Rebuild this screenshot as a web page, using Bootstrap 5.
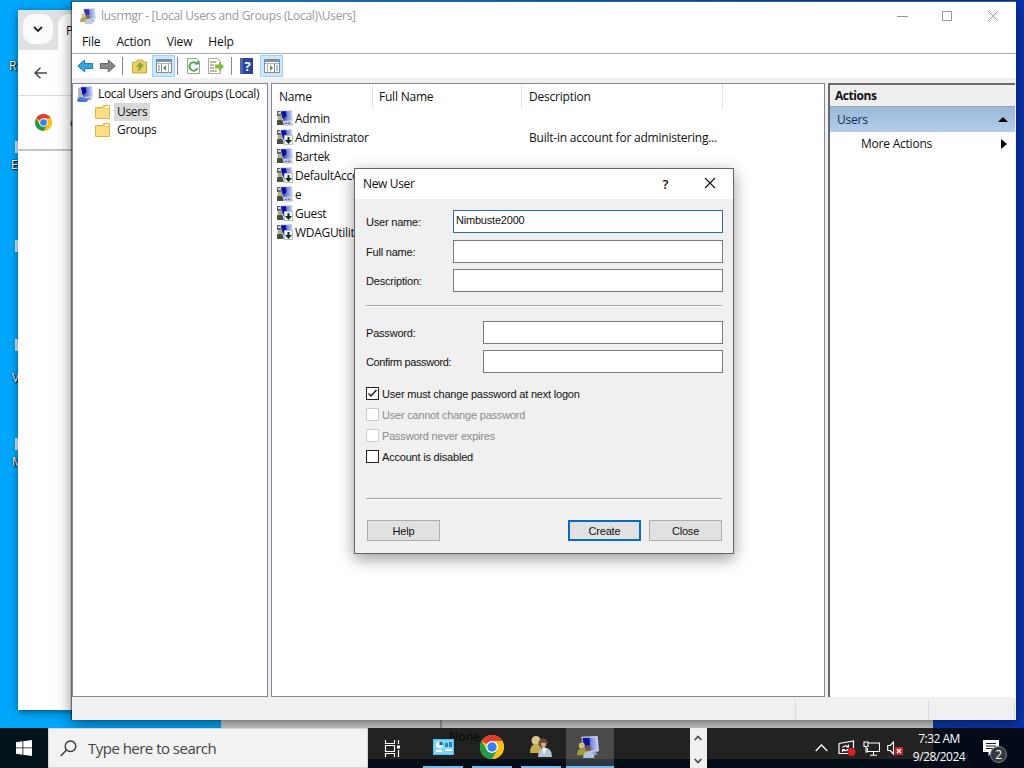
<!DOCTYPE html>
<html lang="en">
<head>
    <meta charset="UTF-8">
    <meta name="viewport" content="width=device-width, initial-scale=1">
    <title>Local Users and Groups</title>
    <link href="https://cdn.jsdelivr.net/npm/bootstrap@5.3.0/dist/css/bootstrap.min.css" rel="stylesheet">
    <style>
        body { width: 1024px; height: 768px; font: 12px/18px "Open Sans", "Noto Sans", sans-serif; letter-spacing: -.22px; color: #111; }
        svg { display: block; flex: none; }
        .desktop { width: 1024px; height: 768px; background: linear-gradient(90deg, #00a6fa 0, #00a6f5 240px, #0a3db0 900px, #0a35ae 100%); }

        /* desktop icons peeking out from behind the windows */
        .shortcut { position: absolute; left: 9px; height: 16px; line-height: 16px; color: #fff; text-shadow: 1px 1px 1px #000, 0 0 2px #000; }
        .sliver { position: absolute; left: 15px; width: 3px; height: 12px; background: #cfeaff; }

        /* windows */
        .win { position: absolute; background: #fff; }
        .browser { left: 18px; top: 10px; width: 300px; height: 700px; box-shadow: 0 2px 7px rgba(0,0,0,.5); }
        .tab-strip { height: 40px; background: #dfe1e2; }
        .tab-strip .chev { width: 30px; height: 30px; margin: 4px 0 0 5px; border-radius: 11px; background: #fbfbfb; }
        .tab-strip .tab-item { margin: 4px 0 0 5px; width: 100px; border-radius: 11px 0 0 0; background: #fff; padding: 8px 0 0 8px; }
        .address { height: 46px; border-bottom: 1px solid #dcdcdc; }
        .bookmarks { height: 55px; border-bottom: 2px solid #c4c4c4; }
        .behind { left: 221px; top: 700px; width: 712px; height: 28px; background: #d1d1d1; }
        .behind .split { margin-left: 219px; width: 2px; height: 28px; background: #999; }

        .mmc { left: 72px; top: 1px; width: 944px; height: 719px; border-top: 1px solid #345f91; background: #f0f0f0; box-shadow: 0 3px 14px rgba(0,0,0,.5), -1px 0 1px rgba(0,0,0,.45); }
        .mmc-title { height: 29px; background: #fff; color: #999; padding: 0 0 2px 8px; letter-spacing: -.31px; }
        .mmc-menu { height: 23px; background: #fff; border-bottom: 1px solid #a7adb1; padding: 0 0 0 10px; letter-spacing: -.15px; }
        .toolbar { height: 24px; background: #fff; padding-left: 5px; }
        .toolbar .sep { width: 1px; height: 18px; background: #888; }
        .toolbar .on { width: 23px; height: 22px; background: #cce8ff; border: 1px solid #99d1ff; }
        .panes { height: 614px; margin-top: 5px; }
        .pane { background: #fff; border: 1px solid #828790; }
        .tree { width: 196px; margin-right: 3px; padding: 1px 0 0 4px; letter-spacing: -.36px; }
        .node { height: 18px; gap: 5px; white-space: nowrap; }
        .node.sub { gap: 6px; letter-spacing: -.3px; }
        .node .label-on { background: #d9d9d9; margin-left: -3px; padding: 0 3px; }
        .list { width: 554px; margin-right: 3px; }
        .list-head { height: 25px; }
        .list-head > div { border-right: 1px solid #e5e5e5; padding: 4px 0 0 7px; }
        .list-head .c2 { padding-left: 6px; }
        .c1 { width: 101px; }
        .c2 { width: 149px; }
        .c3 { width: 201px; }
        .list-row { height: 19px; white-space: nowrap; padding-left: 5px; }
        .list-row .c1 { width: 95px; gap: 2px; letter-spacing: -.3px; }
        .list-row .c3 { padding-left: 8px; letter-spacing: -.22px; }
        .actions { width: 187px; border-width: 2px 0 0 2px; border-color: #696969; }
        .actions-title { height: 22px; background: #f0eeee; border-bottom: 1px solid #a0a0a0; padding: 2px 0 0 5px; font-weight: 700; letter-spacing: -.45px; }
        .actions-group { height: 25px; background: linear-gradient(#9ab8da, #b4cdea); padding: 0 7px; color: #102850; }
        .actions-item { height: 24px; padding: 0 8px 0 31px; }
        .status { height: 23px; padding-right: 1px; }
        .status div { border-right: 1px solid #dadada; margin-top: 3px; }

        .dialog { left: 354px; top: 168px; width: 380px; height: 386px; background: #f0f0f0; border: 1px solid #62666a; box-shadow: 0 5px 15px rgba(0,0,0,.4); font: 11px/14px "Liberation Sans", Arial, sans-serif; letter-spacing: -.2px; }
        .dialog-title { height: 30px; background: #fff; padding: 0 17px 0 8px; font: 12px/18px "Open Sans", sans-serif; letter-spacing: -.35px; }
        .dialog-body { padding: 11px 10px 0 11px; }
        .field { height: 24px; }
        .field label { width: 87px; padding-bottom: 1px; }
        .field.wide label { width: 117px; }
        .field input { flex: 1; align-self: flex-start; height: 23px; border: 1px solid #7a7a7a; border-radius: 0; background: #fff; padding: 0 2px 3px; font: inherit; letter-spacing: inherit; outline: 0; color: #111; min-width: 0; }
        .field input.active { border-color: #2c6da8; }
        .rule { height: 2px; background: #a0a0a0; border-bottom: 1px solid #fff; margin-right: 1px; }
        .check { height: 21px; gap: 3px; }
        .check .box { width: 13px; height: 13px; border: 1px solid #222; background: #fff; }
        .check.off { color: #8b8b8b; }
        .check.off .box { border-color: #ccc; }
        .wbtn { width: 73px; height: 21px; border: 1px solid #adadad; border-radius: 0; background: #e1e1e1; padding: 0; font: inherit; letter-spacing: inherit; color: #111; }
        .wbtn.default { border: 2px solid #0a6ac0; margin-right: 8px; }

        .taskbar { position: absolute; left: 0; top: 728px; width: 1024px; height: 40px; background: linear-gradient(#222 31px, #030d18 31px); color: #fff; }
        .start { width: 48px; background: #04131c; }
        .search { width: 320px; background: #f2f2f2; border: 1px solid #d2d2d2; color: #444; font-size: 15px; padding-left: 11px; gap: 11px; letter-spacing: -.52px; }
        .task { width: 48px; height: 40px; }
        .task.open { width: 40px; margin: 0 4.500px; border-bottom: 2px solid #76b9ed; }
        .task.current { width: 48px; margin: 0 0 0 0; padding-right: 3px; background: linear-gradient(#4a4a4a 31px, #303941 31px); }
        .ghost { position: absolute; left: 449px; top: 0; color: #050505; font-size: 12px; letter-spacing: .2px; }
        .scroller { width: 17px; background: #f0f0f0; padding: 7px 0 4px; }
        .clock { width: 70px; line-height: 18px; padding-top: 2px; letter-spacing: -.5px; text-align: center; }
        .tray-right { position: absolute; left: 933px; top: 0; width: 91px; height: 40px; background: #030a18; }
        .count { position: absolute; left: 7px; top: 6px; width: 17px; height: 17px; border-radius: 50%; background: #333941; border: 1px solid #888; font-size: 12px; line-height: 15px; text-align: center; }
    </style>
</head>
<body class="overflow-hidden m-0">
    <svg width="0" height="0" class="position-absolute">
        <defs>
            <linearGradient id="screen"><stop offset="0" stop-color="#1c2cae"/><stop offset="1" stop-color="#b9c9f2"/></linearGradient>
            <symbol id="monitor" viewBox="0 0 16 16">
                <path d="M3 .5L15 0l1 11-10 1.500z" fill="#ccd3ea"/>
                <path d="M4 1.500l10-.5.800 9-8.300 1z" fill="url(#screen)"/>
                <path d="M4 1.500l5-.2.500 5-4 3z" fill="#1010a0"/>
                <path d="M8 12l5-1 2 2.500-6 1.500z" fill="#9aa3c4"/>
            </symbol>
            <symbol id="console" viewBox="0 0 16 16">
                <use href="#monitor"/>
                <circle cx="3.500" cy="7" r="2.200" fill="#d0c27c"/>
                <path d="M0 14q0-5 3.500-5t4 5z" fill="#a09c38"/>
                <circle cx="8" cy="9" r="2.200" fill="#7a5740"/>
                <path d="M4.500 16q0-5 4-5t4 5z" fill="#b4c6da"/>
            </symbol>
            <symbol id="root" viewBox="0 0 16 16">
                <path d="M1 2l4-1v10l-4 2z" fill="#b2b8bd"/>
                <use href="#monitor"/>
                <path d="M0 15q0-4 5-4l6 2-1 3H2z" fill="#477ac6"/>
            </symbol>
            <symbol id="user" viewBox="0 0 16 16">
                <path d="M0 1h5v5H0zM0 10h6v5H0z" fill="#59605f"/>
                <path d="M1 2h3v2H1z" fill="#cfd5da"/>
                <use href="#monitor"/>
                <circle cx="3" cy="8" r="2.500" fill="#a9ae8a"/>
                <path d="M0 15q0-5 3-5t4 5z" fill="#454f3a"/>
                <path d="M7 12h8l1 3.500H6z" fill="#b9bed2"/>
                <path d="M8 13.500h6" stroke="#666f90" stroke-dasharray="2 1"/>
            </symbol>
            <symbol id="userOff" viewBox="0 0 16 16">
                <use href="#user"/>
                <path d="M7.500 6.500h8v9h-8z" fill="#f4f6f8" stroke="#b9bfc8"/>
                <path d="M10.500 8h2v3H15l-3.500 4L8 11h2.500z" fill="#15301a"/>
            </symbol>
            <symbol id="folder" viewBox="0 0 16 14" preserveAspectRatio="none">
                <path d="M.5 2.500h7l1-2h6v13H.5z" fill="#f5cf6b" stroke="#dfb24c"/>
                <path d="M1 4h13v9H1z" fill="#ffdf86"/>
                <path d="M10 1h4v2h-4z" fill="#fff3c8"/>
            </symbol>
            <symbol id="pane" viewBox="0 0 16 16">
                <path d="M.5 1.500h15v13H.5z" fill="#fff" stroke="#7c8a96"/>
                <path d="M1 2h14v2H1z" fill="#7d91a3"/>
                <path d="M1 5.500h14" stroke="#a9b4bd"/>
            </symbol>
            <symbol id="chrome" viewBox="0 0 24 24">
                <circle cx="12" cy="12" r="12" fill="#fbc116"/>
                <path d="M12 12L1.610 6A12 12 0 0 1 22.390 6z" fill="#e33b2e"/>
                <path d="M12 12V6h10.390A12 12 0 0 1 12 24l5.200-9z" fill="#fbc116"/>
                <path d="M12 12L6.800 15 1.610 6A12 12 0 0 0 12 24l5.200-9z" fill="#229a4b"/>
                <circle cx="12" cy="12" r="6" fill="#fff"/>
                <circle cx="12" cy="12" r="4.700" fill="#3b80ee"/>
            </symbol>
        </defs>
    </svg>

    <div class="desktop position-relative overflow-hidden">
        <div class="shortcut" style="top:58px">R</div>
        <div class="shortcut" style="top:157px;left:11px">E</div>
        <div class="shortcut" style="top:370px;left:12px">V</div>
        <div class="shortcut" style="top:454px;left:12px">M</div>
        <div class="sliver" style="top:141px"></div>
        <div class="sliver" style="top:240px"></div>
        <div class="sliver" style="top:339px"></div>
        <div class="sliver" style="top:438px"></div>

        <!-- Browser behind -->
        <div class="win browser">
            <div class="tab-strip d-flex">
                <div class="chev d-flex align-items-center justify-content-center">
                    <svg width="10" height="7" viewBox="0 0 10 7"><path d="M1 1l4 4 4-4" fill="none" stroke="#222" stroke-width="1.800"/></svg>
                </div>
                <div class="tab-item">P</div>
            </div>
            <div class="address d-flex align-items-center ps-3">
                <svg width="13" height="12" viewBox="0 0 13 12"><path d="M13 6H1M6.500.7L1 6l5.500 5.300" fill="none" stroke="#444" stroke-width="1.500"/></svg>
            </div>
            <div class="bookmarks d-flex align-items-center">
                <svg width="17" height="17" style="margin:0 18px 0 17px"><use href="#chrome"/></svg>
                <span>o</span>
            </div>
        </div>

        <div class="win behind"><div class="split"></div></div>

        <!-- lusrmgr -->
        <div class="win mmc">
            <div class="mmc-title d-flex align-items-center">
                <svg width="16" height="16" opacity=".85"><use href="#console"/></svg>
                <span class="me-auto" style="margin-left:5px">lusrmgr - [Local Users and Groups (Local)\Users]</span>
                <svg width="102" height="12" viewBox="0 0 102 12" style="margin-right:17px" fill="none" stroke="#999">
                    <path d="M0 6.500h11M45.500 1.500h9v9h-9zM91 1l10 10M101 1L91 11"/>
                </svg>
            </div>
            <div class="mmc-menu d-flex align-items-center">
                <span class="me-3">File</span><span class="me-3">Action</span><span class="me-3">View</span><span>Help</span>
            </div>
            <div class="toolbar d-flex align-items-center">
                <svg width="17" height="16" viewBox="0 0 17 16"><path d="M.7 8l7-6v3.500h8v5h-8V14z" fill="#35a5e0" stroke="#237ab0"/></svg>
                <svg width="17" height="16" viewBox="0 0 17 16" style="margin-left:5px"><path d="M16.300 8l-7-6v3.500h-8v5h8V14z" fill="#888" stroke="#666"/></svg>
                <div class="sep" style="margin:0 9px 0 6px"></div>
                <svg width="15" height="16" viewBox="0 0 15 16">
                    <path d="M.5 4.500l4-.5 1-2h5l1 2h3v11H.5z" fill="#efce65" stroke="#c9a640"/>
                    <path d="M4 9l4-5 4 4-2 .5q-1 4-5 4.500 2-2 2-4z" fill="#7cab3c"/>
                </svg>
                <div class="on d-flex align-items-center justify-content-center" style="margin-left:5px">
                    <svg width="16" height="16" viewBox="0 0 16 16"><use href="#pane"/><path d="M5.500 6v9" stroke="#7c8a96"/><path d="M2 8h2M2 10h2M2 12h2" stroke="#67809a"/><path d="M7 10l3-3v6z" fill="#4d9b45"/><path d="M12.500 6v9" stroke="#aab"/></svg>
                </div>
                <div class="sep" style="margin:0 8px 0 2px"></div>
                <svg width="15" height="16" viewBox="0 0 15 16">
                    <path d="M1.500.5h9l3 3v12h-12z" fill="#fff" stroke="#9aa0a0"/>
                    <path d="M11 6a4.200 4.200 0 1 0 .5 4" fill="none" stroke="#4cad4c" stroke-width="2"/><path d="M8 6.500h5V2z" fill="#4cad4c"/>
                </svg>
                <svg width="17" height="16" viewBox="0 0 17 16" style="margin-left:7px">
                    <path d="M.5.5h9l3 3v12H.5z" fill="#fffdf4" stroke="#aaa"/>
                    <path d="M2 4h6M2 7h4M2 10h4M2 13h7" stroke="#777"/>
                    <path d="M7 6.500h4v-3l5 5-5 5v-3H7z" fill="#89b83e"/>
                </svg>
                <div class="sep" style="margin:0 8px 0 6px"></div>
                <svg width="14" height="16" viewBox="0 0 14 16">
                    <path d="M0 0h13v16H0z" fill="#2b449c"/><path d="M0 0h3v16H0z" fill="#5468ab"/>
                    <text x="4.500" y="12.500" font-size="13" font-weight="700" fill="#fff">?</text>
                </svg>
                <div class="on d-flex align-items-center justify-content-center" style="margin-left:6px">
                    <svg width="16" height="16" viewBox="0 0 16 16"><use href="#pane"/><path d="M10.500 6v9" stroke="#7c8a96"/><path d="M12 8h2M12 10h2M12 12h2" stroke="#67809a"/><path d="M6 7l3 3-3 3z" fill="#4d9b45"/><path d="M3.500 6v9" stroke="#aab"/></svg>
                </div>
            </div>

            <div class="panes d-flex">
                <div class="pane tree">
                    <div class="node d-flex align-items-center"><svg width="16" height="16"><use href="#root"/></svg>Local Users and Groups (Local)</div>
                    <div class="node sub d-flex align-items-center ps-3"><svg width="16" height="14" style="margin-left:2px"><use href="#folder"/></svg><span class="label-on">Users</span></div>
                    <div class="node sub d-flex align-items-center ps-3"><svg width="16" height="14" style="margin-left:2px"><use href="#folder"/></svg>Groups</div>
                </div>
                <div class="pane list">
                    <div class="list-head d-flex">
                        <div class="c1">Name</div><div class="c2">Full Name</div><div class="c3">Description</div>
                    </div>
                    <div class="list-row d-flex align-items-center"><div class="c1 d-flex"><svg width="16" height="16"><use href="#user"/></svg>Admin</div></div>
                    <div class="list-row d-flex align-items-center">
                        <div class="c1 d-flex"><svg width="16" height="16"><use href="#userOff"/></svg>Administrator</div>
                        <div class="c2"></div>
                        <div class="c3">Built-in account for administering...</div>
                    </div>
                    <div class="list-row d-flex align-items-center"><div class="c1 d-flex"><svg width="16" height="16"><use href="#user"/></svg>Bartek</div></div>
                    <div class="list-row d-flex align-items-center"><div class="c1 d-flex"><svg width="16" height="16"><use href="#userOff"/></svg>DefaultAcco...</div></div>
                    <div class="list-row d-flex align-items-center"><div class="c1 d-flex"><svg width="16" height="16"><use href="#user"/></svg>e</div></div>
                    <div class="list-row d-flex align-items-center"><div class="c1 d-flex"><svg width="16" height="16"><use href="#userOff"/></svg>Guest</div></div>
                    <div class="list-row d-flex align-items-center"><div class="c1 d-flex"><svg width="16" height="16"><use href="#userOff"/></svg>WDAGUtility...</div></div>
                </div>
                <div class="pane actions">
                    <div class="actions-title">Actions</div>
                    <div class="actions-group d-flex align-items-center justify-content-between">Users
                        <svg width="10" height="5" viewBox="0 0 10 5"><path d="M0 5l5-5 5 5z"/></svg>
                    </div>
                    <div class="actions-item d-flex align-items-center justify-content-between">More Actions
                        <svg width="6" height="10" viewBox="0 0 6 10"><path d="M0 0l6 5-6 5z"/></svg>
                    </div>
                </div>
            </div>
            <div class="status d-flex">
                <div style="width:724px"></div><div style="width:133px"></div><div class="flex-fill"></div>
            </div>
        </div>

        <!-- New User dialog -->
        <div class="win dialog">
            <div class="dialog-title d-flex align-items-center">
                <span class="me-auto">New User</span>
                <span style="margin-right:36px;font-size:13px;font-weight:600">?</span>
                <svg width="12" height="12" viewBox="0 0 12 12" style="margin-bottom:2px"><path d="M1 1l10 10M11 1L1 11" stroke="#111" stroke-width="1.100"/></svg>
            </div>
            <div class="dialog-body">
                <div class="field d-flex align-items-center"><label>User name:</label><input type="text" class="active" value="Nimbuste2000"></div>
                <div class="field d-flex align-items-center" style="margin-top:6px"><label>Full name:</label><input type="text"></div>
                <div class="field d-flex align-items-center" style="margin-top:5px"><label>Description:</label><input type="text"></div>
                <div class="rule" style="margin-top:12px"></div>
                <div class="field wide d-flex align-items-center" style="margin-top:14px"><label>Password:</label><input type="password"></div>
                <div class="field wide d-flex align-items-center" style="margin-top:5px"><label style="letter-spacing:-.38px">Confirm password:</label><input type="password"></div>
                <div class="check d-flex align-items-center" style="margin-top:9px">
                    <div class="box"><svg width="11" height="11" viewBox="0 0 11 11"><path d="M1.500 5.500L4 8l5.500-6" fill="none" stroke="#111" stroke-width="1.300"/></svg></div>User must change password at next logon
                </div>
                <div class="check off d-flex align-items-center"><div class="box"></div>User cannot change password</div>
                <div class="check off d-flex align-items-center"><div class="box"></div>Password never expires</div>
                <div class="check d-flex align-items-center"><div class="box"></div>Account is disabled</div>
                <div class="rule" style="margin-top:31px"></div>
                <div class="d-flex" style="margin:20px 1px 0">
                    <button class="wbtn me-auto">Help</button>
                    <button class="wbtn default">Create</button>
                    <button class="wbtn">Close</button>
                </div>
            </div>
        </div>

        <!-- Taskbar -->
        <div class="taskbar d-flex">
            <div class="tray-right"></div>
            <div class="start d-flex align-items-center justify-content-center">
                <svg width="16" height="16" viewBox="0 0 16 16" fill="#fff"><path d="M0 2.200L6.500 1.300V7.500H0zM7.300 1.200L16 0V7.500H7.300zM0 8.300h6.500v6.400L0 13.800zM7.300 8.300H16V16l-8.700-1.200z"/></svg>
            </div>
            <div class="search d-flex align-items-center">
                <svg width="17" height="17" viewBox="0 0 17 17" fill="none" stroke="#333" stroke-width="1.300"><circle cx="10.500" cy="6.300" r="5.300"/><path d="M6.500 10L.7 16"/></svg>
                <span>Type here to search</span>
            </div>
            <span class="ghost">None</span>
            <div class="task d-flex align-items-center justify-content-center">
                <svg width="17" height="17" viewBox="0 0 17 17" fill="none" stroke="#fff" stroke-width="1.200"><path d="M1.500 0v3.500h9V0M1.500 5.500h9v6h-9zM1.500 17v-3.500h9V17M14.500 0v4M14.500 10v7"/><path d="M13 5.500h3v3h-3z" fill="#fff" stroke="none"/></svg>
            </div>
            <div class="task open d-flex align-items-center justify-content-center position-relative" style="margin-left:7px">
                <svg width="21" height="16" viewBox="0 0 21 16"><path d="M0 0h21v16H0z" fill="#55c1ee"/><path d="M1 1h19v14H1z" fill="#7fd4f7"/><circle cx="6.500" cy="6" r="3.500" fill="#e9f7fd"/><path d="M6.500 6V2.500A3.500 3.500 0 0 1 10 6z" fill="#156b9d"/><path d="M12 4h3v4h-3zM16 3h3v5h-3z" fill="#2387b9"/><path d="M3 12h6M12 11h7" stroke="#fff" stroke-width="2"/></svg>
            </div>
            <div class="task open d-flex align-items-center justify-content-center position-relative">
                <svg width="24" height="24"><use href="#chrome"/></svg>
            </div>
            <div class="task open d-flex align-items-center justify-content-center">
                <svg width="22" height="22" viewBox="0 0 22 22">
                    <circle cx="6" cy="4.500" r="4.500" fill="#dcc48e"/><path d="M0 17q0-9 6-9t6 9z" fill="#c2ae4c"/>
                    <circle cx="13" cy="7" r="4.500" fill="#6a4c3a"/><path d="M11 7h5l-1 5h-3z" fill="#d6af93"/><path d="M8 21q0-9 7-9t7 9z" fill="#b4c2d1"/><path d="M12 12l2 7 3-7z" fill="#eef2f5"/>
                </svg>
            </div>
            <div class="task open current d-flex align-items-center justify-content-center">
                <svg width="22" height="22"><use href="#console"/></svg>
            </div>
            <div class="scroller d-flex flex-column align-items-center justify-content-between" style="margin-left:76px">
                <svg width="8" height="6" viewBox="0 0 8 6"><path d="M.7 5L4 1.500 7.300 5" fill="none" stroke="#444" stroke-width="1.600"/></svg>
                <svg width="8" height="6" viewBox="0 0 8 6"><path d="M.7 1L4 4.500 7.300 1" fill="none" stroke="#444" stroke-width="1.600"/></svg>
            </div>
            <div class="d-flex align-items-center ms-auto position-relative" style="gap:7px">
                <svg width="13" height="8" viewBox="0 0 13 8"><path d="M.7 7l5.800-6 5.800 6" fill="none" stroke="#fff" stroke-width="1.300"/></svg>
                <svg width="18" height="16" viewBox="0 0 18 16" style="margin-left:3px"><path d="M1 3.500L15.500 1v7M1 3.500v10h9" fill="none" stroke="#fff" stroke-width="1.200"/><path d="M4.500 7.500q3-3 6-.5M10.500 9q-3 3-6 .5M10.500 4.500V7H8M4.500 12V9.500H7" fill="none" stroke="#fff" stroke-width="1.200"/><circle cx="13.500" cy="12" r="4" fill="#d32029"/></svg>
                <svg width="17" height="15" viewBox="0 0 17 15" fill="none" stroke="#fff" stroke-width="1.100"><path d="M5.500 2h11v8.500h-12V7M10.500 10.500V14M7 14.200h7M1 1h4v4.500H1zM3 5.500V11h2"/></svg>
                <svg width="16" height="15" viewBox="0 0 16 15"><path d="M.7 4.500h2.500L6.500 1v12L3.200 9.500H.7z" fill="none" stroke="#fff" stroke-width="1.100"/><path d="M8 6h8v8H8z" fill="#d32029"/><path d="M10 8l4 4M14 8l-4 4" stroke="#fff" stroke-width="1.400"/></svg>
                <div class="clock align-self-start" style="margin-left:-6px">7:32 AM<br>9/28/2024</div>
                <div class="position-relative" style="margin:0 17px 0 2px">
                    <svg width="24" height="17" viewBox="0 0 24 17"><path d="M0 0h16v12H9l-3.500 4V12H0z" fill="#fff"/><path d="M3 3.500h10M3 6h10M3 8.500h7" stroke="#142030"/></svg>
                    <span class="count">2</span>
                </div>
            </div>
        </div>
    </div>

    <script src="https://cdn.jsdelivr.net/npm/bootstrap@5.3.0/dist/js/bootstrap.bundle.min.js"></script>
</body>
</html>
